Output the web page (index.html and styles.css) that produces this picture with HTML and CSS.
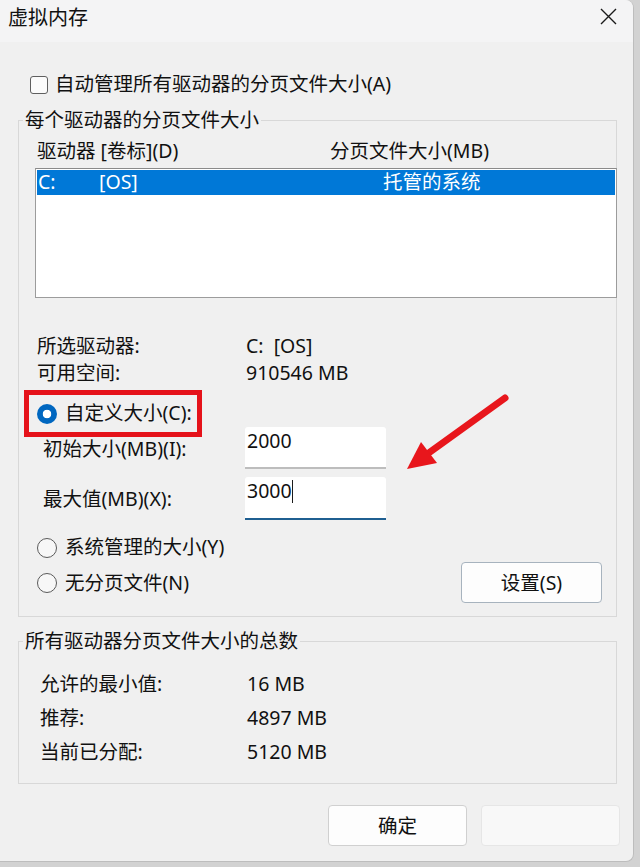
FILE: index.html
```html
<!DOCTYPE html>
<html lang="zh-CN">
<head>
<meta charset="utf-8">
<title>虚拟内存</title>
<link rel="stylesheet" href="styles.css">
</head>
<body>
<div class="window">
  <div class="titlebar">
    <span class="title">虚拟内存</span>
    <svg class="close" width="17" height="17" viewBox="0 0 17 17"><path d="M1 1 L16 16 M16 1 L1 16" stroke="#1a1a1a" stroke-width="1.4" fill="none"/></svg>
  </div>
  <div class="content">
    <div class="check-row"><span class="checkbox"></span><span>自动管理所有驱动器的分页文件大小(A)</span></div>

    <fieldset class="group g1">
      <legend>每个驱动器的分页文件大小</legend>
      <div class="g1-inner">
        <div class="cols"><span class="col1">驱动器 [卷标](D)</span><span>分页文件大小(MB)</span></div>
        <div class="listbox">
          <div class="lb-row selected"><span class="lb-drive">C:</span><span class="lb-label">[OS]</span><span>托管的系统</span></div>
        </div>
        <div class="info first"><span class="k">所选驱动器:</span><span>C:&nbsp;&nbsp;[OS]</span></div>
        <div class="info"><span class="k">可用空间:</span><span>910546 MB</span></div>

        <div class="radio-row custom">
          <span class="radio on"></span><span>自定义大小(C):</span>
          <span class="redbox"></span>
        </div>
        <div class="field-row r1">
          <span class="flabel">初始大小(MB)(I):</span>
          <div class="input">2000</div>
        </div>
        <div class="field-row r2">
          <span class="flabel">最大值(MB)(X):</span>
          <div class="input focus">3000<span class="caret"></span></div>
        </div>
        <div class="radio-row sys"><span class="radio"></span><span>系统管理的大小(Y)</span></div>
        <div class="last-row">
          <div class="radio-row"><span class="radio"></span><span>无分页文件(N)</span></div>
          <div class="btn set">设置(S)</div>
        </div>
      </div>
    </fieldset>

    <fieldset class="group g2">
      <legend>所有驱动器分页文件大小的总数</legend>
      <div class="g2-inner">
        <div class="trow"><span class="tk">允许的最小值:</span><span>16 MB</span></div>
        <div class="trow"><span class="tk">推荐:</span><span>4897 MB</span></div>
        <div class="trow"><span class="tk">当前已分配:</span><span>5120 MB</span></div>
      </div>
    </fieldset>

    <div class="buttons">
      <div class="btn ok">确定</div>
      <div class="btn faded"></div>
    </div>
  </div>
  <svg class="arrow" width="120" height="90" viewBox="0 0 120 90">
    <line x1="105" y1="13" x2="30" y2="67" stroke="#e8161c" stroke-width="7" stroke-linecap="round"/>
    <polygon points="7,84 21,57 37,78" fill="#e8161c"/>
  </svg>
</div>
</body>
</html>
```

FILE: styles.css
```css
* { box-sizing: border-box; }

html, body {
  margin: 0;
  padding: 0;
}

body {
  background: #d2d2d2;
  width: 640px;
  height: 867px;
  overflow: hidden;
  font-family: "Noto Sans", "Noto Sans CJK SC", sans-serif;
  font-size: 19.5px;
  line-height: 24px;
  color: #111;
}

.window {
  position: relative;
  width: 634px;
  height: 862px;
  background: #f0f0f0;
  border-right: 1px solid #bdbdbd;
  border-bottom: 1px solid #bdbdbd;
  border-top-right-radius: 8px;
  border-bottom-right-radius: 8px;
}

.titlebar {
  height: 42px;
  background: #f4f4f5;
  display: flex;
  justify-content: space-between;
  align-items: flex-start;
  padding: 6px 16px 0 8px;
  border-top-right-radius: 8px;
}

.title {
  font-size: 20px;
  line-height: 24px;
}

.close {
  margin-top: 2px;
}

.content {
  padding: 0 16px 0 18px;
}

.check-row {
  display: flex;
  align-items: center;
  margin-top: 30px;
  padding-left: 12px;
  height: 24px;
}

.checkbox {
  width: 18px;
  height: 18px;
  border: 1px solid #5f5f5f;
  border-radius: 3px;
  background: #fbfbfb;
  margin-right: 7px;
  margin-top: 1px;
}

.group {
  margin: 0;
  padding: 0;
  border: 1px solid #d8d8d8;
  min-width: 0;
}

.group legend {
  margin-left: 4px;
  padding: 0 2px;
  line-height: 24px;
}

.g1 {
  margin-top: 12px;
}

.g1-inner {
  padding: 7px 14px 13px 18px;
}

.cols {
  display: flex;
  height: 24px;
}

.col1 {
  width: 293px;
}

.listbox {
  margin: 5px -15px 0 -2px;
  height: 130px;
  background: #fff;
  border: 1px solid #9c9c9c;
  border-top-color: #8a8a8a;
  padding: 1px;
}

.lb-row {
  display: flex;
  height: 25px;
  line-height: 24px;
  padding-left: 1px;
}

.lb-row.selected {
  background: #0078d7;
  color: #fff;
}

.lb-drive {
  width: 61px;
}

.lb-label {
  width: 284px;
}

.info {
  display: flex;
  line-height: 26px;
  height: 27px;
}

.info.first {
  margin-top: 35px;
}

.info .k {
  width: 209px;
}

.radio-row {
  position: relative;
  display: flex;
  align-items: center;
  height: 24px;
}

.radio {
  width: 20px;
  height: 20px;
  border-radius: 50%;
  border: 1px solid #5a5a5a;
  background: #f7f7f7;
  margin-right: 8px;
  flex: none;
  margin-top: 1px;
}

.radio.on {
  border: none;
  background: radial-gradient(circle, #ffffff 0 4px, #0067c0 4.6px);
}

.custom {
  margin-top: 14px;
}

.redbox {
  position: absolute;
  left: -13px;
  top: -11px;
  width: 178px;
  height: 47px;
  border: 5px solid #e5121a;
}

.field-row {
  display: flex;
  align-items: center;
  padding-left: 6px;
}

.field-row.r1 {
  margin-top: 2px;
  height: 42px;
}

.field-row.r2 {
  margin-top: 8px;
  height: 43px;
}

.flabel {
  width: 202px;
  padding-top: 1px;
}

.input {
  width: 141px;
  height: 100%;
  background: #fff;
  border-bottom: 2px solid #bdbdbd;
  border-radius: 3px 3px 0 0;
  padding: 2px 0 0 2px;
  display: flex;
  align-items: flex-start;
}

.input.focus {
  border-bottom: 2px solid #1f5f91;
}

.caret {
  display: inline-block;
  width: 1.5px;
  height: 23px;
  background: #1b1b1b;
  margin-top: 1px;
}

.sys {
  margin-top: 15px;
}

.last-row {
  margin-top: 3px;
  height: 41px;
  display: flex;
  justify-content: space-between;
  align-items: center;
}

.btn {
  height: 41px;
  display: flex;
  align-items: center;
  justify-content: center;
  background: #fdfdfd;
  border: 1px solid #d0d0d0;
  border-radius: 4px;
}

.btn.set {
  width: 141px;
  border-color: #a7b3be;
}

.g2 {
  margin-top: 12px;
}

.g2-inner {
  padding: 15px 0 13px 21px;
}

.trow {
  display: flex;
  height: 34px;
  line-height: 32px;
}

.tk {
  width: 207px;
}

.buttons {
  display: flex;
  justify-content: flex-end;
  gap: 14px;
  margin: 21px -3px 0 0;
}

.btn.ok {
  width: 139px;
}

.btn.faded {
  width: 139px;
  background: #f8f8f8;
  border-color: #e6e6e6;
}

.arrow {
  position: absolute;
  left: 400px;
  top: 385px;
}
```
